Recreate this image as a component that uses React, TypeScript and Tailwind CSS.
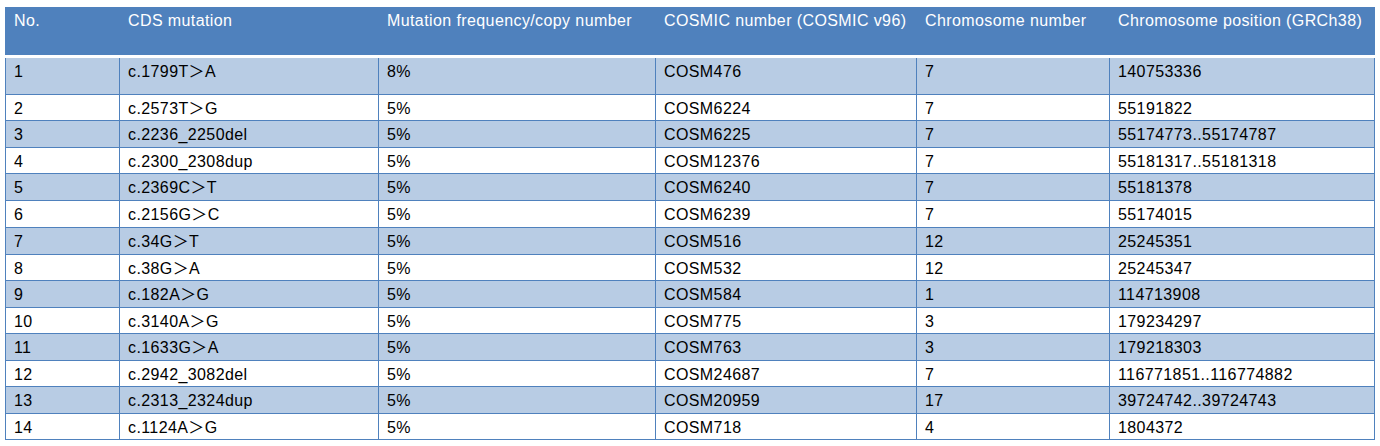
import React from 'react';

const columns = [
  'No.',
  'CDS mutation',
  'Mutation frequency/copy number',
  'COSMIC number (COSMIC v96)',
  'Chromosome number',
  'Chromosome position (GRCh38)',
];

const rows = [
  { h: 'h-[37px]', cells: ['1', 'c.1799T＞A', '8%', 'COSM476', '7', '140753336'] },
  { h: 'h-[26px]', cells: ['2', 'c.2573T＞G', '5%', 'COSM6224', '7', '55191822'] },
  { h: 'h-[27px]', cells: ['3', 'c.2236_2250del', '5%', 'COSM6225', '7', '55174773..55174787'] },
  { h: 'h-[26px]', cells: ['4', 'c.2300_2308dup', '5%', 'COSM12376', '7', '55181317..55181318'] },
  { h: 'h-[27px]', cells: ['5', 'c.2369C＞T', '5%', 'COSM6240', '7', '55181378'] },
  { h: 'h-[27px]', cells: ['6', 'c.2156G＞C', '5%', 'COSM6239', '7', '55174015'] },
  { h: 'h-[27px]', cells: ['7', 'c.34G＞T', '5%', 'COSM516', '12', '25245351'] },
  { h: 'h-[26px]', cells: ['8', 'c.38G＞A', '5%', 'COSM532', '12', '25245347'] },
  { h: 'h-[27px]', cells: ['9', 'c.182A＞G', '5%', 'COSM584', '1', '114713908'] },
  { h: 'h-[26px]', cells: ['10', 'c.3140A＞G', '5%', 'COSM775', '3', '179234297'] },
  { h: 'h-[27px]', cells: ['11', 'c.1633G＞A', '5%', 'COSM763', '3', '179218303'] },
  { h: 'h-[26px]', cells: ['12', 'c.2942_3082del', '5%', 'COSM24687', '7', '116771851..116774882'] },
  { h: 'h-[27px]', cells: ['13', 'c.2313_2324dup', '5%', 'COSM20959', '17', '39724742..39724743'] },
  { h: 'h-[26px]', cells: ['14', 'c.1124A＞G', '5%', 'COSM718', '4', '1804372'] },
];

const grid = 'grid grid-cols-[113px_259px_277px_261px_193px_265px]';

export default function App() {
  return (
    <div
      className="min-h-[446px] bg-white pl-[5px] pt-[7px] text-[16px] tracking-[0.4px] leading-[18px]"
      style={{ fontFamily: '"Liberation Sans", Arial, "Noto Sans CJK SC", sans-serif' }}
    >
      <div className="w-[1370px]">
        {/* Header */}
        <div className={`${grid} h-[48px] border-x border-[#4f81bd] bg-[#4f81bd] text-white`}>
          {columns.map((c, i) => (
            <div
              key={c}
              className={`whitespace-nowrap pl-2 pt-[5px] ${i > 0 ? 'border-l border-[#4f81bd]' : ''}`}
            >
              {c}
            </div>
          ))}
        </div>
        <div className="h-[3px] bg-white" />

        {/* Body */}
        <div className="border-x border-[#4f81bd] text-black">
          {rows.map((r, ri) => (
            <div
              key={ri}
              className={`${grid} ${r.h} border-b border-[#4f81bd] ${ri % 2 === 0 ? 'bg-[#b8cce4]' : 'bg-white'}`}
            >
              {r.cells.map((c, ci) => (
                <div
                  key={ci}
                  className={`whitespace-nowrap pl-2 pt-[5px] ${ci > 0 ? 'border-l border-[#4f81bd]' : ''}`}
                >
                  {c}
                </div>
              ))}
            </div>
          ))}
        </div>
      </div>
    </div>
  );
}
